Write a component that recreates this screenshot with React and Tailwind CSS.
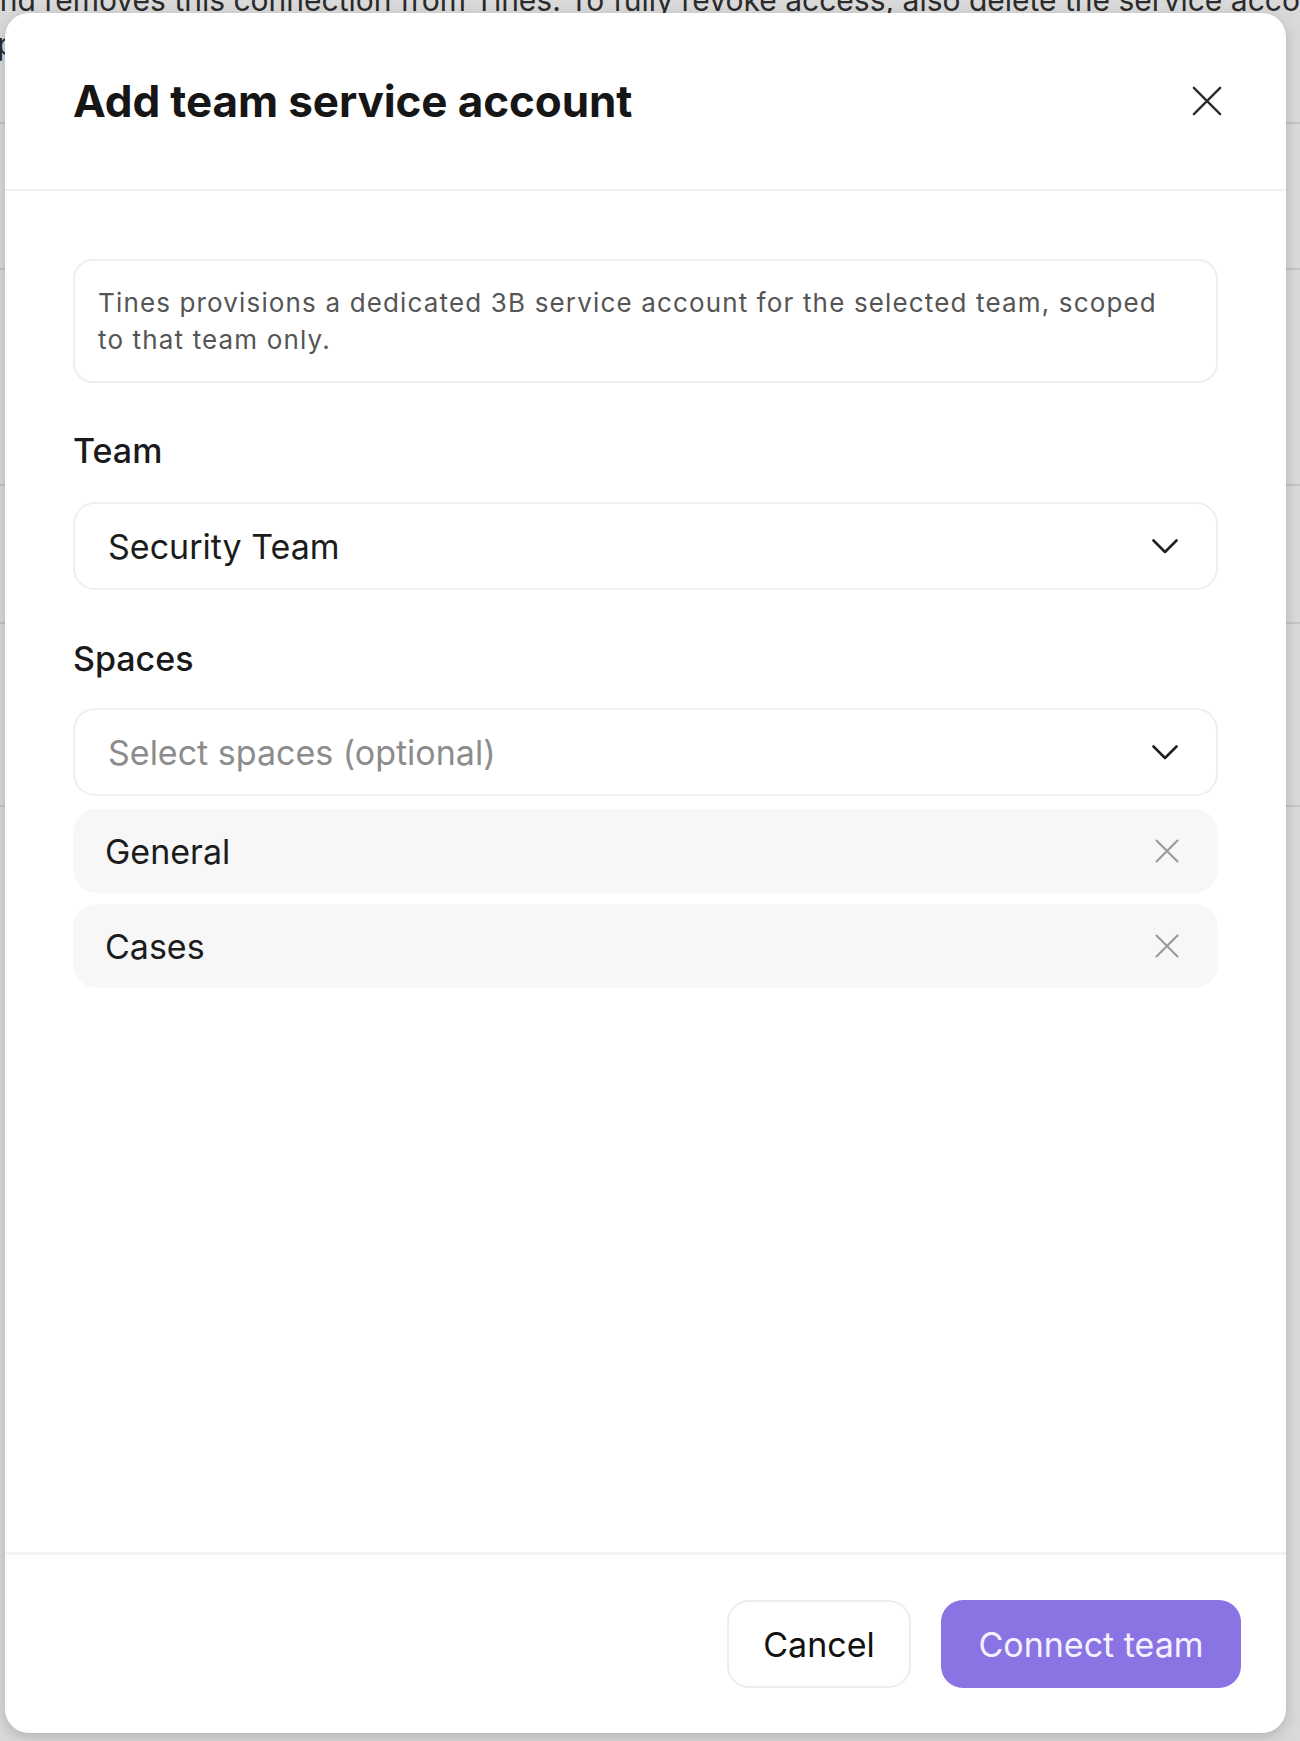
function Chevron() {
    return (
        <svg width="26" height="15" viewBox="0 0 26 15" fill="none" className="shrink-0">
            <polyline
                points="1.5,1.5 13,13 24.5,1.5"
                stroke="#1f1f1f"
                strokeWidth="2.6"
                strokeLinecap="round"
                strokeLinejoin="round"
            />
        </svg>
    );
}

function Cross({ size, color, width }) {
    return (
        <svg width={size} height={size} viewBox="0 0 24 24" fill="none" className="shrink-0">
            <path
                d="M1.5 1.5 22.5 22.5M22.5 1.5 1.5 22.5"
                stroke={color}
                strokeWidth={width}
                strokeLinecap="round"
            />
        </svg>
    );
}

function SelectBox({ value, placeholder }) {
    return (
        <div className="flex h-[88px] items-center justify-between rounded-[22px] border-2 border-[#efefef] bg-white pl-[33px] pr-[38px]">
            {value ? (
                <span className="text-[34px] text-[#1c1c1c]">{value}</span>
            ) : (
                <span className="text-[34px] text-[#8c8c8c]">{placeholder}</span>
            )}
            <Chevron />
        </div>
    );
}

function SpaceChip({ name }) {
    return (
        <div className="flex h-[84px] items-center justify-between rounded-[24px] bg-[#f7f7f7] pl-[32px] pr-[39px]">
            <span className="text-[34px] text-[#1c1c1c]">{name}</span>
            <Cross size={24} color="#9a9a9a" width={2.1} />
        </div>
    );
}

// settings page sitting under the dialog backdrop
function PageBehind() {
    return (
        <div className="flex flex-col">
            <div className="h-[124px] border-b-2 border-[#e8e8e8]">
                <p className="-ml-[17px] -mt-[22px] whitespace-nowrap text-[30px] leading-[44px] text-[#333]">
                    and removes this connection from Tines. To fully revoke access, also delete the service account in 3B.
                </p>
                <p className="-ml-[3px] whitespace-nowrap text-[30px] leading-[44px] text-[#333]">
                    permissions granted to it.
                </p>
            </div>
            <div className="h-[146px] border-b-2 border-[#e8e8e8]" />
            <div className="h-[216px] border-b-2 border-[#e8e8e8]" />
            <div className="h-[138px] border-b-2 border-[#e8e8e8]" />
            <div className="h-[183px] border-b-2 border-[#e8e8e8]" />
        </div>
    );
}

export default function App() {
    return (
        <div className="relative h-[1741px] w-[1300px] overflow-hidden bg-white font-['Inter','Noto_Sans',sans-serif]">
            <PageBehind />
            <div className="absolute inset-0 bg-black/15" />

            {/* Dialog */}
            <div className="absolute left-[5px] top-[13px] flex h-[1720px] w-[1281px] flex-col overflow-hidden rounded-[24px] bg-white shadow-[0_4px_14px_rgba(0,0,0,0.18)]">
                <div className="flex h-[178px] shrink-0 items-center justify-between border-b-2 border-[#f1f1f1] pl-[68px] pr-[64px]">
                    <h2 className="text-[44px] font-bold tracking-[-0.1px] text-[#161616]">
                        Add team service account
                    </h2>
                    <button className="text-[#2a2a2a]">
                        <Cross size={30} color="#2a2a2a" width={1.9} />
                    </button>
                </div>

                <div className="flex flex-1 flex-col px-[68px] pt-[68px]">
                    <div className="rounded-[20px] border-2 border-[#efefef] py-[23px] pl-[23px] pr-[40px]">
                        <p className="text-[26px] leading-[37px] tracking-[1.15px] text-[#555]">
                            Tines provisions a dedicated 3B service account for the selected team, scoped to that team only.
                        </p>
                    </div>

                    <label className="mb-[29px] mt-[46px] text-[34px] font-medium leading-[44px] text-[#1a1a1a]">
                        Team
                    </label>
                    <SelectBox value="Security Team" />

                    <label className="mb-[27px] mt-[47px] text-[34px] font-medium leading-[44px] text-[#1a1a1a]">
                        Spaces
                    </label>
                    <SelectBox placeholder="Select spaces (optional)" />

                    <div className="mt-[13px] flex flex-col gap-[11px]">
                        <SpaceChip name="General" />
                        <SpaceChip name="Cases" />
                    </div>
                </div>

                <div className="flex h-[181px] shrink-0 items-center justify-end gap-[30px] border-t-[3px] border-[#f3f3f3] pr-[45px]">
                    <button className="h-[88px] w-[184px] rounded-[22px] border-2 border-[#ededed] bg-white text-[34px] text-[#111]">
                        Cancel
                    </button>
                    <button className="h-[88px] w-[300px] rounded-[22px] bg-[#8a73e3] text-[34px] text-[#f5f2ff]">
                        Connect team
                    </button>
                </div>
            </div>
        </div>
    );
}
